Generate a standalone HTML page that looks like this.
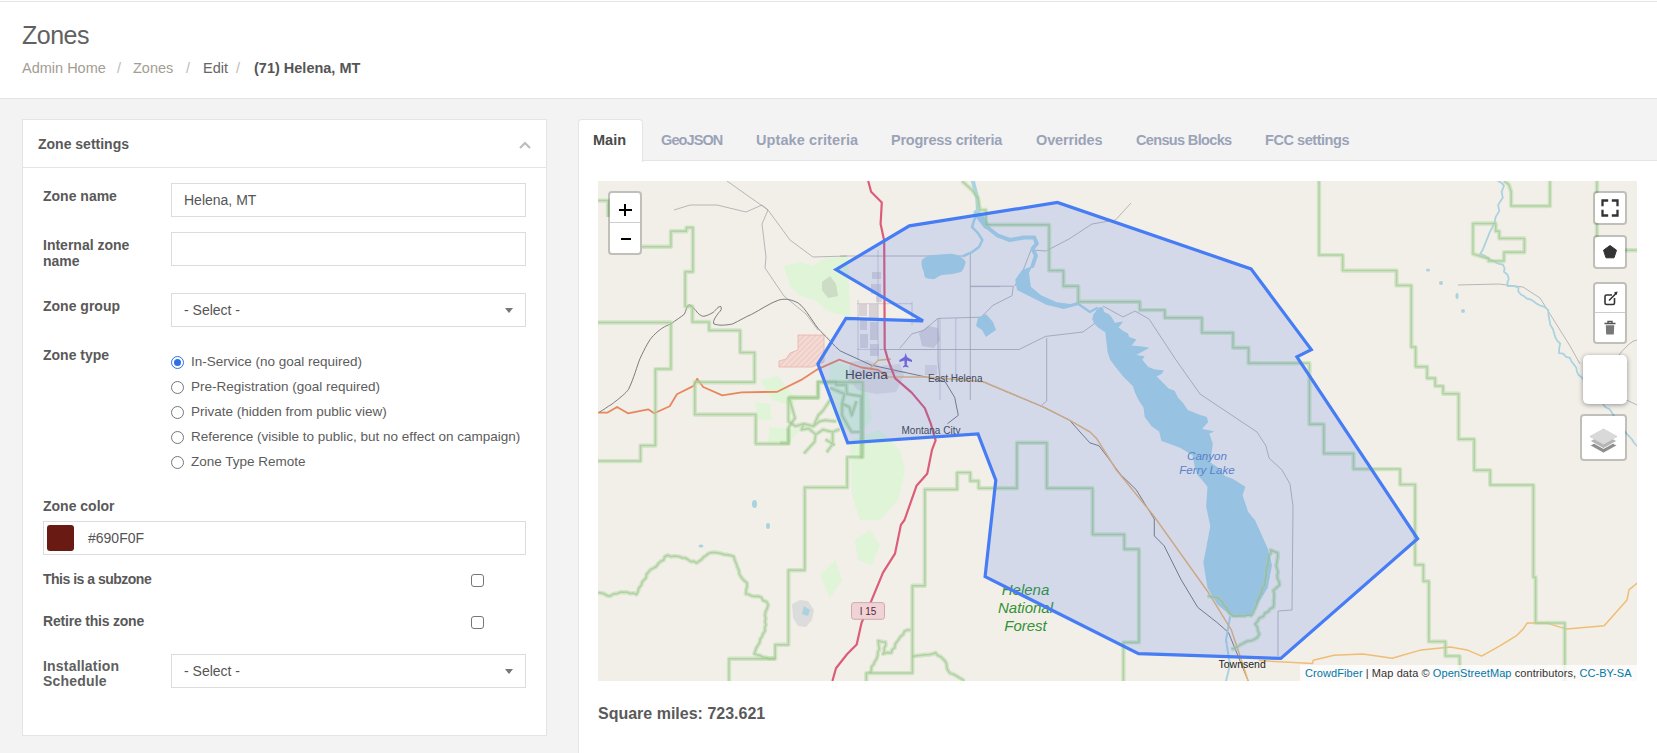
<!DOCTYPE html>
<html><head><meta charset="utf-8">
<style>
*{box-sizing:border-box;margin:0;padding:0}
html,body{width:1657px;height:753px;overflow:hidden}
body{background:#f3f3f3;font-family:"Liberation Sans",sans-serif;color:#555;position:relative}
.abs{position:absolute}
#topline{left:0;top:1px;width:1657px;height:1px;background:#e3e5e8}
#header{left:0;top:2px;width:1657px;height:97px;background:#fff;border-bottom:1px solid #e3e3e3}
#title{left:22px;top:21px;font-size:25px;letter-spacing:-0.5px;color:#616161;white-space:nowrap}
#crumbs{left:22px;top:60px;font-size:14.5px;white-space:nowrap;color:#a39d92}
#crumbs span{position:absolute;top:0;white-space:nowrap}
.card{left:22px;top:119px;width:525px;height:617px;background:#fff;border:1px solid #e4e4e4}
.cardhead{left:0;top:0;width:523px;height:48px;border-bottom:1px solid #e4e4e4}
.lbl{position:absolute;margin-top:-1px;font-weight:bold;font-size:14px;color:#595959;white-space:nowrap;line-height:16px}
.inp{position:absolute;left:148px;width:355px;height:34px;border:1px solid #dcdcdc;background:#fff;font-size:14px;color:#555;padding-left:12px;line-height:32px;white-space:nowrap}
.radio{position:absolute;left:148px;width:13px;height:13px;border:1px solid #767676;border-radius:50%;background:#fff}
.rtxt{position:absolute;left:168px;font-size:13.5px;color:#5c5c5c;white-space:nowrap;line-height:16px}
.chk{position:absolute;left:448px;width:13px;height:13px;border:1px solid #767676;border-radius:3px;background:#fff}
.arrow{position:absolute;right:12px;top:14px;width:0;height:0;border-left:4px solid transparent;border-right:4px solid transparent;border-top:5px solid #777}
#tabs{left:578px;top:132px}
.tab{position:absolute;top:0;font-size:14.5px;font-weight:bold;color:#9aa3b7;white-space:nowrap}
#panel{left:578px;top:160px;width:1079px;height:593px;background:#fff;border-left:1px solid #e4e4e4;border-top:1px solid #e4e4e4}
#maintab{left:578px;top:119px;width:65px;height:43px;background:#fff;border:1px solid #e4e4e4;border-bottom:none;border-radius:4px 4px 0 0}
#map{left:598px;top:181px;width:1039px;height:500px;background:#f2efe9;overflow:hidden}
.lc{position:absolute;background:#fff;border:2px solid rgba(0,0,0,0.2);border-radius:4px;background-clip:padding-box}
</style></head><body>
<div id="header" class="abs" style="top:0;height:99px"></div>
<div id="topline" class="abs"></div>
<div id="title" class="abs">Zones</div>
<div id="crumbs" class="abs">
 <span style="left:0">Admin Home</span>
 <span style="left:95px;color:#bbb">/</span>
 <span style="left:111px">Zones</span>
 <span style="left:164px;color:#bbb">/</span>
 <span style="left:181px;color:#666">Edit</span>
 <span style="left:214px;color:#bbb">/</span>
 <span style="left:232px;color:#555;font-weight:bold">(71) Helena, MT</span>
</div>

<div class="card abs">
 <div class="cardhead abs">
  <div class="lbl" style="left:15px;top:17px">Zone settings</div>
  <svg width="14" height="10" viewBox="0 0 14 10" style="position:absolute;left:495px;top:20px"><path d="M2,8 L7,3 L12,8" fill="none" stroke="#bdbdbd" stroke-width="2.2"/></svg>
 </div>
 <div class="lbl" style="left:20px;top:69px">Zone name</div>
 <div class="inp" style="top:63px">Helena, MT</div>
 <div class="lbl" style="left:20px;top:118px">Internal zone<br>name</div>
 <div class="inp" style="top:112px"></div>
 <div class="lbl" style="left:20px;top:179px">Zone group</div>
 <div class="inp" style="top:173px">- Select -<div class="arrow"></div></div>
 <div class="lbl" style="left:20px;top:228px">Zone type</div>
 <div class="radio" style="top:236px;border:1px solid #2f6fe6;background:#fff"><div style="position:absolute;left:2px;top:2px;width:7px;height:7px;border-radius:50%;background:#2f6fe6"></div></div><div class="rtxt" style="top:234px">In-Service (no goal required)</div>
 <div class="radio" style="top:261px"></div><div class="rtxt" style="top:259px">Pre-Registration (goal required)</div>
 <div class="radio" style="top:286px"></div><div class="rtxt" style="top:284px">Private (hidden from public view)</div>
 <div class="radio" style="top:311px"></div><div class="rtxt" style="top:309px">Reference (visible to public, but no effect on campaign)</div>
 <div class="radio" style="top:336px"></div><div class="rtxt" style="top:334px">Zone Type Remote</div>
 <div class="lbl" style="left:20px;top:379px">Zone color</div>
 <div class="inp" style="left:20px;width:483px;top:401px;padding-left:44px">#690F0F<div style="position:absolute;left:3px;top:3px;width:27px;height:26px;background:#691a12;border-radius:3px"></div></div>
 <div class="lbl" style="left:20px;top:452px;letter-spacing:-0.5px">This is a subzone</div>
 <div class="chk" style="top:454px"></div>
 <div class="lbl" style="left:20px;top:494px;letter-spacing:-0.2px">Retire this zone</div>
 <div class="chk" style="top:496px"></div>
 <div class="lbl" style="left:20px;top:540px;line-height:15px;font-size:14px;color:#606060;letter-spacing:0.2px">Installation<br>Schedule</div>
 <div class="inp" style="top:534px">- Select -<div class="arrow"></div></div>
</div>

<div id="panel" class="abs"></div>
<div id="maintab" class="abs"></div>
<div id="tabs" class="abs">
 <span class="tab" style="left:15px;color:#4a4a4a">Main</span>
 <span class="tab" style="left:83px;letter-spacing:-0.9px">GeoJSON</span>
 <span class="tab" style="left:178px;letter-spacing:0.1px">Uptake criteria</span>
 <span class="tab" style="left:313px;letter-spacing:-0.25px">Progress criteria</span>
 <span class="tab" style="left:458px;letter-spacing:-0.15px">Overrides</span>
 <span class="tab" style="left:558px;letter-spacing:-0.65px">Census Blocks</span>
 <span class="tab" style="left:687px;letter-spacing:-0.45px">FCC settings</span>
</div>
<div id="map" class="abs"><svg width="1039" height="500" viewBox="598 181 1039 500" style="position:absolute;left:0;top:0">
<rect x="598" y="181" width="1039" height="500" fill="#f2efe9"/>
<!-- light green patches -->
<g fill="#daf5d2" fill-opacity="0.75">
 <path d="M784,266 L800,262 L812,266 L826,258 L848,256 L850,316 L835,314 L826,310 L815,300 L800,296 L790,286 Z"/>
 <path d="M760,380 L778,376 L790,392 L800,398 L790,405 L772,400 Z"/>
 <path d="M850,440 L880,430 L900,450 L905,470 L898,500 L880,520 L860,520 L852,495 Z"/>
 <path d="M755,402 L770,404 L772,420 L758,420 Z"/>
 <path d="M770,427 L800,430 L790,442 L768,442 Z"/>
 <path d="M820,575 L835,560 L842,580 L830,598 Z"/>
 <path d="M830,362 L850,366 L868,392 L872,420 L860,432 L840,428 L828,400 Z"/>
 <path d="M855,540 L870,530 L880,545 L872,565 L858,560 Z"/>
</g>
<path d="M822,282 L830,276 L836,284 L838,296 L828,298 L822,290 Z" fill="#cddcc5"/>
<!-- town areas -->
<g fill="#d3ccd3" fill-opacity="0.85">
 <rect x="859" y="304" width="8" height="12"/><rect x="869" y="304" width="9" height="14"/><rect x="860" y="320" width="7" height="10"/>
 <rect x="870" y="322" width="8" height="18"/><rect x="860" y="334" width="8" height="14"/><rect x="870" y="344" width="9" height="12"/>
 <rect x="872" y="272" width="9" height="7"/><rect x="871" y="284" width="10" height="10"/><rect x="876" y="296" width="6" height="6"/>
 <path d="M919,333 L928,326 L938,328 L940,340 L934,348 L922,346 Z"/>
 <path d="M850,362 L868,360 L880,366 L900,364 L904,376 L896,392 L876,394 L858,390 L848,380 Z" fill-opacity="0.55"/>
 <rect x="925" y="365" width="12" height="10" fill-opacity="0.6"/>
</g>
<g fill="none" stroke="#bdb8c6" stroke-width="0.7">
 <path d="M857,303.7 H912 M858,300 V360 M878,250 V360 M912,302 V325 M940,318 V400 M955.8,318 V376 M857,349.4 H880 M970.7,286.7 H1000 M850,372 H905"/>
</g>
<defs><pattern id="hatch" width="4" height="4" patternUnits="userSpaceOnUse" patternTransform="rotate(-45)"><rect width="4" height="4" fill="#f4dcd6"/><path d="M0,2 H4" stroke="#e9b9ae" stroke-width="0.8"/></pattern></defs>
<path d="M798,335 L824,335 L824,362 L812,367 L779,367 L779,361 L786,359 L790,353 L798,350 Z" fill="url(#hatch)" stroke="#eab3a8" stroke-width="0.8"/>
<!-- gray roads -->
<g fill="none" stroke="#a3a3a6" stroke-width="0.75">
 <path d="M727,181 L768,210 L790,240 L813,257 L847,256"/>
 <path d="M674,210 L690,205 L717,205 L746,212 L762,205 L768,210"/>
 <path d="M768,210 L762,224 L766,257 L765,268 L784,296 L806,314 L818,330"/>
 <path d="M840,256 L964,256"/>
 <path d="M1131,203 L1115.5,220 L1092,224 L1069,239 L1046,251 L1031,250 L1021.6,274.2 L1014.5,286.2"/>
 
 <path d="M880,349.5 L1019,349.5 L1045.5,336.4 L1083,332 L1094,324 L1097,310"/>
 <path d="M938,318.4 L938,361 L940,380"/>
 <path d="M970.3,253 L970.3,400"/>
 <path d="M970.3,286.2 L1013.3,286.2 L1012,295.7 L993,305.3 L981,317.2 L938,318.4 L923.7,330.4 L911.7,334 L899.8,348.3"/><path d="M1046.7,338 L1046.7,401 L1042,405"/>
 <path d="M1103,306 L1123,317 L1135,311 L1149,319 L1176,360 L1200,394 L1257,432 L1266,446 L1269,458 L1282,470 L1290,484 L1293,506 L1292,610 L1278,611 L1278,656"/>
 <path d="M1458,285 L1499,284 L1523,287 L1540,298 L1570,346 L1580,364"/>
 <path d="M1615,360 Q1630,340 1637,340"/>
 <path d="M1616,395 L1637,405"/>
</g>
<!-- railway -->
<g fill="none" stroke="#6e6e6e" stroke-width="0.9">
 <path d="M598.5,412.5 C604,410 608,406 611,404.8 C620,398 626,393 628.5,389.4 C634,378 637,366 640,358.6 C645,348 649,340 653.5,335.5 C660,329 665,326 670.8,324 C676,320 681,317 684.3,314.3 C686,311 687,305 689.3,304.7 C692,305 694,309 695.8,310.5 C698,314 701,316 703.5,316.3 C707,316 710,314 713.2,312.4 C716,310 718,306 720.9,306.6 C722,308 721,311 719,312.4 C716,316 712,322 714,324 C720,326 727,325 732.4,324 C739,321 745,317 751.7,314.3 C760,310 770,303 778.6,300.1 C786,298 792,300 797.9,302.8 C806,308 814,325 821,331.7 C828,338 834,346 840.2,350.9 L871.1,365.1 L926,377 L945.2,381.8 L954.7,397.4 L958.3,415.3 L947.5,423.7"/>
 <path d="M983,381.8 L1043,406.9 L1069.4,420.1 L1089.8,442.8 L1099,445.8 L1120.6,474.5 L1136.1,489.6 L1154.3,519 L1154.3,535.9 L1164.1,545.7 L1180.9,579.3 L1197.7,607.3 L1217.3,622.7 L1228.5,632.6 L1248.2,681"/>
</g>
<!-- water -->
<g fill="#aad3df" stroke="none">
 <path d="M921.8,260.2 C926,256 930,255 933.5,254.9 L950.5,253.8 C956,254 960,256 962.2,258.1 C965,260 966,262 965.4,263.4 C964,268 963,270 961.1,271.9 L952.6,274 L942,275.1 C938,276 936,279 933.5,279.3 L926.1,278.2 C924,276 924,274 923.9,271.9 C922,268 921,264 921.8,260.2 Z"/>
 <path d="M1099.3,307.2 L1102.9,307.2 L1104.1,311.9 L1108.9,314.3 L1111.3,316.7 L1114.9,322.7 L1123.2,321.5 L1118.5,327.5 L1123.2,331.1 L1128.0,333.5 L1129.2,337.0 L1136.4,339.4 L1131.6,345.4 L1142.3,346.6 L1149.5,347.8 L1136.4,355.0 L1144.7,356.2 L1142.3,359.7 L1148.3,366.9 L1154.3,369.3 L1163.9,370.5 L1161.5,374.1 L1156.7,376.5 L1161.5,381.2 L1168.6,388.4 L1174.6,390.8 L1178.2,398.0 L1183.0,402.7 L1187.7,409.9 L1199.7,414.7 L1206.9,417.1 L1208.1,421.9 L1202.1,429.0 L1209.3,430.2 L1214.0,431.4 L1209.3,433.8 L1212.8,443.4 L1211.6,452.9 L1210.4,462.5 L1217.6,467.3 L1225,476 L1233,479 L1245.4,486.8 L1242.6,495.2 L1248.2,512.0 L1255.2,520.4 L1267.8,548.5 L1272.0,565.3 L1267.8,587.7 L1259.4,601.7 L1251.0,615.7 L1232.7,617.1 L1217.3,604.5 L1207.5,587.7 L1203.3,562.5 L1206.1,548.5 L1210.3,526.0 L1206.1,506.4 L1207.5,486.8 L1202.1,479.9 L1197.7,475.6 L1194.9,467.3 L1192.5,455.3 L1180.6,448.1 L1168.6,443.4 L1161.5,441.0 L1159.1,431.4 L1151.9,426.6 L1144.7,417.1 L1143.5,407.5 L1138.8,400.4 L1135.2,393.2 L1132.8,386.0 L1123.2,376.5 L1117.3,369.3 L1110.1,359.7 L1107.7,352.6 L1106.5,343.0 L1105.3,332.3 L1098.1,327.5 L1094.6,323.9 L1092.2,319.1 L1093.4,314.3 Z"/>
 <path d="M1032.5,266 L1029,272.8 L1030.8,286.7 L1041.1,295.3 L1056.7,302.2 L1070.5,303.9 L1077.4,302.2 L1079,305 L1063.6,309.1 L1046.3,304.8 L1029,296.1 L1017,290.1 L1015.2,279.7 L1022,270 Z"/>
 <path d="M978,318 L986,314 L993,322 L996,330 L990,334 L986,337 L982,330 L976,326 Z"/>
 <path d="M792,604 L800,600 L808,601 L814,610 L812,620 L806,627 L798,626 L793,618 Z" fill="#dcdcdc"/><path d="M804,606 L810,610 L808,616 L802,614 Z" fill="#aad3df"/>
 <ellipse cx="754.5" cy="504" rx="2.5" ry="4"/>
 <ellipse cx="768" cy="526" rx="2" ry="3"/>
 <ellipse cx="701" cy="546" rx="2.5" ry="1.5"/>
 <ellipse cx="1428" cy="270" rx="2" ry="1.5"/>
 <ellipse cx="1441" cy="283" rx="2" ry="2"/>
 <ellipse cx="1457" cy="296" rx="1.5" ry="3"/>
 <ellipse cx="1463" cy="311" rx="2" ry="2"/>
</g>
<g fill="none" stroke="#aad3df" stroke-linecap="round" stroke-linejoin="round">
 <path d="M972.9,181 L977.3,198.6 L978.1,212.4 L985.9,226.2 L998,235.7 L1010,240 L1023.9,237.5 L1034.2,237.5 L1036.8,243.5 L1032.5,248.7 L1035.9,255.6 L1032.5,266" stroke-width="4"/>
 <path d="M978,212 L973.8,221.1 L972.1,227.1 L977.3,232.3 L982.4,240 L979,247 L972.1,252.1 L963.5,256" stroke-width="2.5"/>
 <path d="M977,213 L986,225" stroke-width="7"/>
 <path d="M1498.1,181.0 L1501.5,182.9 L1504.0,185.8 L1501.6,191.8 L1502.8,197.7 L1500.4,201.3 L1498.1,204.9 L1499.3,210.9 L1495.7,216.9 L1494.5,222.8 L1492.1,227.6 L1489.7,232.4 L1487.3,238.4 L1484.9,244.3 L1482.5,250.3 L1480.1,253.9 L1483.9,255.4 L1487.3,257.5 L1491.4,260.1 L1495.7,262.3 L1499.2,263.8 L1502.8,264.7 L1504.6,268.1 L1504.0,271.8 L1507.5,274.7 L1508.8,279.0 L1507.4,282.4 L1507.6,286.2 L1511.3,285.9 L1514.9,286.3 L1518.4,287.4 L1518.3,291.4 L1520.8,294.5 L1524.0,296.1 L1526.7,298.5 L1530.3,299.3 L1533.5,301.2 L1536.5,303.6 L1539.9,305.3 L1544.5,306.9 L1548.3,310.1 L1548.5,314.9 L1549.4,319.6 L1550.3,324.7 L1553.0,329.2 L1554.2,333.4 L1555.4,337.5 L1557.3,340.9 L1560.2,343.5 L1559.2,348.2 L1559.0,353.1 L1563.1,353.6 L1566.1,356.9 L1570.0,357.9 L1571.5,361.5 L1574.0,364.6 L1576.3,367.8 L1577.0,371.8 L1578.8,375.3 L1582.0,377.5 L1584.0,380.8 L1586.2,384.0 L1589.0,386.6 L1591.1,389.8 L1594.6,391.8 L1596.2,395.4 L1599.4,397.6 L1601.8,400.6 L1603.1,404.3 L1605.5,407.2 L1609.4,409.0 L1611.5,412.0 L1613.6,415.2 L1614.3,419.3 L1617.7,421.5 L1619.5,424.8 L1622.4,427.3 L1624.2,430.6 L1626.5,433.6 L1629.4,436.5 L1632.0,439.5 L1634.2,443.0 L1637.0,446.0" stroke-width="1.8"/>
 <path d="M1230,617 L1226,640 L1230,665 L1226,681" stroke-width="2"/>
 <path d="M1077,303 L1090,312 L1097,308" stroke-width="2.2"/>
</g>
<!-- orange roads -->
<g fill="none" stroke-linecap="round" stroke-linejoin="round">
 <path d="M598,412.6 L607.6,412.6 L617.1,406.9 L627.9,413.3 L648.2,409.3 L654.2,413.3 L669.7,406.2 L676.9,394.2 L693.6,385.9 L697.2,378.7 L703.2,387 L722.3,395.4 L741.4,392.3 L777.3,391.8 L801.2,379.9 L817.9,369.1 L839.4,359.6 L861.5,367.5 L878.2,369.9 L887.8,377" stroke="#e8875e" stroke-width="1.8"/>
 <path d="M871,367.5 L878.2,360.3 L890.2,359.1" stroke="#e9b574" stroke-width="1.6"/>
 <path d="M887.8,377 L926,377 L983.4,381.8 L1043.2,406.9 L1069.4,420.1 L1090,432 L1096.7,438.6 L1116.4,470 L1152.9,514.8 L1208.9,593.3 L1231.3,629.8 L1248.2,681" stroke="#e9b574" stroke-width="1.5"/>
 <path d="M1259.4,660.6 L1312.6,663.4 L1313.2,660.3 L1334,655.3 L1363.1,654 L1392.2,658.2 L1421.3,649.9 L1450.4,647 L1467,649.9 L1481.6,656.1 L1500.3,645.7 L1516.9,635.3 L1523.1,629.1 L1527.3,622.9 L1546,622.9 L1566.8,629.1 L1604.2,625.8 L1627,600 L1629.1,589.6 L1637,583.4" stroke="#efbd74" stroke-width="1.5"/>
</g>
<!-- I-15 -->
<path d="M868.2,181 L871.1,191.8 L881.8,202.5 L880.6,224 L884.2,240.8 L884.7,348.3 L887.8,359.1 L895,378.2 L911.7,392.6 L924.8,408.1 L930.8,423.7 L935.6,440.4 L932,449.9 L927.2,473.8 L916.5,485.8 L904.5,520 L900.9,524.9 L895,553.6 L883,572.7 L871.1,601.4 L861.5,622.9 L856.7,644.4 L847.2,654 L836,668.3 L832.4,681" fill="none" stroke="#dc5d78" stroke-width="2.2" stroke-linejoin="round"/>
<!-- green boundaries -->
<defs><g id="gb">
 <path id="g1" d="M598,200.6 H608 V217 M642,246.7 H670.9 V231.2 H686.4 V227.6 H692.9 V271.8 H685.2 V306.5 H692.4 V322 H709.1 V330.4 H740.2 V352.6 H754.5 V382.3 H694.8 V414.5 H755.7 V443.7 H788.5 V427.7 L795,418 L789.2,397.8 H817.9 V382.3 H862.7 V457.1 H847.2 V487.4 H804.7 V570.2 H788.4 V644.7 H775.2 V658.7 H729 V681"/>
 <path id="g2" d="M598,322.5 H670.9 V369.1 H655.4 V445.6 H640.5 V461.1 H598"/>
 <path id="g3" d="M598.0,592.5 L601.1,593.1 L604.2,593.7 L606.9,595.6 L610.0,596.2 L613.3,594.0 L617.2,593.5 L620.8,592.1 L624.0,592.3 L627.2,592.2 L630.2,593.6 L633.5,593.1 L636.5,594.5 L638.0,591.4 L638.9,588.0 L641.3,585.3 L642.0,582.3 L644.0,579.9 L646.2,577.7 L646.4,574.4 L648.5,572.1 L650.5,569.6 L653.5,568.1 L656.3,566.5 L658.2,563.8 L660.4,561.4 L663.5,560.2 L664.7,556.7 L667.7,555.3 L671.2,556.6 L675.0,556.1 L678.6,556.4 L682.1,557.7 L685.3,558.0 L688.0,559.5 L690.6,561.5 L693.9,561.3 L696.6,563.0 L699.1,561.2 L701.6,559.4 L703.6,557.0 L706.3,555.4 L708.6,553.4 L711.6,552.5 L714.6,552.5 L717.6,552.8 L720.6,553.4 L723.8,554.5 L727.2,554.8 L730.6,555.4 L733.8,556.5 L734.8,560.2 L736.3,563.7 L737.4,567.3 L739.0,570.4 L739.2,573.9 L741.0,576.9 L743.7,580.2 L747.0,582.9 L747.1,586.6 L746.1,590.2 L745.8,593.8 L748.9,594.6 L751.9,596.0 L755.1,596.4 L758.5,596.3 L761.5,597.4 L763.0,600.5 L766.5,601.7 L768.2,604.6 L767.3,608.2 L765.6,611.7 L765.0,615.4 L765.7,618.5 L765.0,621.6 L765.9,624.8 L764.7,627.9 L765.0,631.0 L763.1,633.6 L762.0,636.7 L760.1,639.3 L759.7,642.7 L757.9,645.4 L756.3,648.0 L755.3,650.9 L754.3,653.8 L757.3,654.9 L760.3,655.6 L763.1,657.2 L766.3,657.5 L769.2,658.8 L772.4,658.2 L775.4,658.7"/>
 <path id="g4" d="M866.3,681 V673.1 H912.4 V585.8 H924.8 V489.4 H957.1 V472.6 H970.3 V481 H978.6 V488.2 H1016.9 V442.8 H1046.7 V488.2 H1092.6 V534.5 H1124.3 V549.3 H1138.9 V642.4 H1123.4 V681"/>
 <path id="g5" d="M869.9,673.1 L871.4,670.2 L871.5,666.8 L873.8,664.3 L874.9,661.3 L876.8,658.5 L877.6,655.4 L877.8,652.0 L879.4,649.2 L878.6,645.0 L878.2,640.8 L881.7,641.7 L885.4,642.0 L885.7,645.2 L884.3,648.0 L884.3,651.1 L883.0,654.0 L887.1,652.6 L891.4,652.8 L892.1,649.7 L894.8,647.8 L895.1,644.5 L896.7,642.0 L898.6,639.6 L900.4,636.7 L903.1,634.5 L904.5,631.3 L907.3,629.9 L910.5,630.1"/>
 <path id="g6" d="M912.4,656.4 L916.8,655.7 L921.3,655.2 L924.9,654.7 L928.6,654.8 L932.1,654.0 L935.6,652.8 L937.5,655.4 L940.7,656.6 L942.9,658.9 L945.2,661.1 L946.6,664.0 L946.8,667.4 L947.9,670.4 L949.9,673.1 L953.1,674.1 L956.0,675.7 L958.8,677.4 L961.7,679.0 L964.3,681.0"/>
 <path id="g7" d="M962,181 L972,190 L978,198 L980,210 L985.8,210 V224.7 H1049.1 V270.6 H1063.5 V286.2 H1078.3 V301.7 H1139.8 V310.1 H1164.8 V317.7 H1201.9 V332.8 H1233 V347.8 H1248.5 V363.3 H1309.4 V424.3 H1323.8 V453.5 H1353.5 V469.1 H1400.1 V484.6 H1415.1 V564.7 H1423.4 V581.3 H1428.8 V641.6 H1445.4 V656.1 H1459.6 V681"/>
 <path id="g8" d="M1319,181 V255.1 H1342.7 V270.6 H1396.5 V285.4 H1411.3 V347.1 H1415.6 V366.8 H1427.1 V378.2 H1435.2 V386.1 H1443.1 V393.8 H1458.6 V439.2 H1474.2 V470.3 H1490.2 V485.1 H1533.4 V577.2 H1535.6 V622.9 H1564.7 V681"/>
 <path id="g9" d="M1504,181 L1508.8,184.6 L1511.2,191.8 V206.1 H1549.9 V181"/>
 <path id="g10" d="M1473,223.5 H1495.7 V231.2 H1499.3 V238.4 H1524.4 V252.2 H1504 V261.1 H1488.5 V258.7 L1473,253.9 Z"/>
 <path id="g11" d="M1596.9,181 V250.3 H1637"/>
 <path id="g13" d="M788.4,397.5 H818.2 V382 H836.2 V384.9 H846.3 L846.9,393.9 L861.2,396.3 V458.4 M788.4,397.5 V421.4 L795.5,426.2 L803.9,423.8 L813.5,426.2 L819.4,421.4 L825.4,420.2 L836.2,421.4 M813.5,426.2 L818.2,415.4 L823,410.6 L830.2,399.9 M803.9,423.8 L801.5,429.7 L808.7,428.5 L815.8,434.5 L814.6,441.7 L803.9,453.6 M815.8,434.5 L823,429.7 L832.6,432.1 L832.6,444.1 L826.6,452.4 M825.4,439.3 L835,445.3 M832.6,432.1 L839.7,429.1 M830.2,387.9 L844.5,393.9 L842.1,403.5 L849.3,407 L851.7,415.4 L856.5,401.1 M842.1,403.5 L842.1,415.4 L846.9,423.8 L851.7,432.1 L861.2,432.1 M788.4,428.5 V442.9 H780"/>
 <path id="g12" d="M1207.5,596.1 L1210.8,596.5 L1214.0,597.2 L1217.3,597.5 L1219.9,599.8 L1222.5,602.1 L1224.0,605.2 L1226.3,607.7 L1228.2,610.6 L1229.8,613.7 L1232.7,615.7 L1235.8,616.1 L1238.8,615.7 L1241.8,615.9 L1244.9,616.1 L1248.0,614.8 L1251.0,615.7 L1253.0,613.2 L1254.1,610.3 L1255.5,607.6 L1256.6,604.7 L1257.2,601.6 L1258.5,598.8 L1259.2,595.8 L1261.4,593.4 L1261.7,590.1 L1262.9,587.3 L1265.0,584.9 L1264.9,581.6 L1265.4,578.4 L1266.2,575.3 L1266.2,572.0 L1266.6,568.8 L1267.4,565.7 L1267.8,562.5 L1268.8,559.4 L1268.6,556.1 L1270.8,553.2 L1270.6,549.9 L1274.0,551.5 L1277.6,552.7 L1277.9,555.9 L1277.4,559.1 L1276.9,562.2 L1276.2,565.3 L1277.0,568.5 L1278.1,571.7 L1277.2,575.2 L1277.5,578.5 L1279.1,581.6 L1279.6,584.9 L1276.5,587.7 L1273.4,590.5 L1274.2,593.9 L1274.2,597.2 L1273.7,600.6 L1273.9,603.9 L1273.4,607.3 L1270.2,608.7 L1268.2,611.7 L1265.0,613.0 L1263.3,616.4 L1259.4,618.0 L1257.6,621.3 L1255.2,624.1 L1257.3,627.1 L1257.9,630.7 L1259.4,634.0 L1257.3,637.5 L1253.8,639.6 L1251.0,640.7 L1247.8,641.0 L1245.1,642.3 L1242.5,643.7 L1239.8,645.2 L1237.2,647.0 L1234.3,648.2 L1231.3,649.4"/>
</g></defs>
<use href="#gb" fill="none" stroke="#b9d8ab" stroke-width="4.4" stroke-opacity="0.55" stroke-linejoin="round"/>
<use href="#gb" fill="none" stroke="#9fca90" stroke-width="1.5" stroke-opacity="0.7" stroke-linejoin="round"/>
<!-- labels -->
<g font-family="Liberation Sans, sans-serif" fill="#333">
 <text x="845" y="379.4" font-size="13.5" fill="#444" stroke="#fff" stroke-width="0" >Helena</text>
 <text x="928" y="381.8" font-size="10" fill="#444">East Helena</text>
 <text x="901.5" y="433.7" font-size="10" fill="#444">Montana City</text>
 <text x="1218.5" y="667.6" font-size="10.5" fill="#222">Townsend</text>
 <g font-style="italic" fill="#5f86c4" font-size="11.6" text-anchor="middle">
  <text x="1207" y="459.7">Canyon</text>
  <text x="1207" y="474">Ferry Lake</text>
 </g>
 <g font-style="italic" fill="#349234" font-size="15" text-anchor="middle">
  <text x="1025.5" y="595.4">Helena</text>
  <text x="1025.5" y="613.3">National</text>
  <text x="1025.5" y="631.3">Forest</text>
 </g>
</g>
<!-- I-15 shield -->
<rect x="851.5" y="602.6" width="33" height="16.7" rx="2.5" fill="#efd3d7" stroke="#c99aa2" stroke-width="0.8"/>
<text x="868" y="614.5" font-family="Liberation Sans, sans-serif" font-size="10" fill="#5a2a34" text-anchor="middle">I 15</text>
<!-- airplane -->
<path d="M905.7,353 L907,357 L912,360 L912,362 L907,360.5 L906.8,365 L908.5,366.5 L908.5,367.5 L905.7,366.8 L902.9,367.5 L902.9,366.5 L904.6,365 L904.4,360.5 L899.4,362 L899.4,360 L904.4,357 Z" fill="#7b66d6"/>
<!-- zone polygon -->
<path d="M835.9,269.6 L909.4,225.9 L1057.4,202.5 L1251,268.9 L1311.3,349.6 L1296.9,356.8 L1417.6,538.8 L1280.8,658.4 L1138.5,653.7 L985.1,576.6 L995.8,480.2 L978,434 L847.7,442.8 L817.9,363.9 L845.9,318.4 L923,320.9 Z" fill="#3a6ff0" fill-opacity="0.17" stroke="#467cf4" stroke-width="3.2" stroke-linejoin="miter"/>
</svg>

<div class="lc" style="left:10px;top:10px;width:34px;height:64px">
 <div style="position:absolute;left:0;top:29px;width:30px;height:1px;background:#ccc"></div>
 <div style="position:absolute;left:9px;top:15.7px;width:12.5px;height:2.4px;background:#000"></div>
 <div style="position:absolute;left:14px;top:10.5px;width:2.4px;height:12.5px;background:#000"></div>
 <div style="position:absolute;left:10.5px;top:44.5px;width:10px;height:2.4px;background:#000"></div>
</div>
<div class="lc" style="left:995px;top:10px;width:34px;height:34px">
 <svg width="30" height="30" viewBox="0 0 30 30" style="position:absolute;left:0;top:0"><path d="M7.5,13.2 V7.5 H13.2 M16.8,7.5 H22.5 V13.2 M22.5,16.8 V22.5 H16.8 M13.2,22.5 H7.5 V16.8" fill="none" stroke="#333" stroke-width="2.3"/></svg>
</div>
<div class="lc" style="left:995px;top:54px;width:34px;height:34px">
 <svg width="30" height="30" viewBox="0 0 30 30" style="position:absolute;left:0;top:0"><path d="M15,8.5 L21.5,13.2 L19,20.8 L11,20.8 L8.5,13.2 Z" fill="#333" stroke="#333" stroke-width="1" stroke-linejoin="round"/></svg>
</div>
<div class="lc" style="left:995px;top:101px;width:34px;height:62px">
 <div style="position:absolute;left:0;top:28px;width:30px;height:1px;background:#ccc"></div>
 <svg width="30" height="60" viewBox="0 0 30 60" style="position:absolute;left:0;top:0">
  <path d="M17,11 H11.5 Q10,11 10,12.5 V19 Q10,20.5 11.5,20.5 H18 Q19.5,20.5 19.5,19 V14" fill="none" stroke="#333" stroke-width="1.6"/>
  <path d="M14,16.5 L20.5,10 M19.5,9 L21.5,8.5 L21,10.5" fill="none" stroke="#333" stroke-width="1.6"/>
  <path d="M9.5,39.5 H20.5 M13,39.5 V37.5 H17 V39.5" fill="none" stroke="#555" stroke-width="1.4"/>
  <path d="M10.8,41.3 H19.2 L18.8,50.5 H11.2 Z" fill="#777"/>
 </svg>
</div>
<div style="position:absolute;left:985px;top:174px;width:44px;height:49px;background:#fff;border-radius:5px;box-shadow:0 1px 5px rgba(0,0,0,0.4)"></div>
<div class="lc" style="left:982px;top:233px;width:47px;height:47px">
 <svg width="43" height="43" viewBox="0 0 43 43" style="position:absolute;left:0;top:0">
  <path d="M8,29.5 L21.5,22 L35,29.5 L21.5,37 Z" fill="#8e8e8e" stroke="#fff" stroke-width="0.8"/>
  <path d="M8,25 L21.5,17.5 L35,25 L21.5,32.5 Z" fill="#b5b5b5" stroke="#fff" stroke-width="0.9"/>
  <path d="M8,20.5 L21.5,13 L35,20.5 L21.5,28 Z" fill="#d9d9d9" stroke="#fff" stroke-width="0.9"/>
  <path d="M8,20.5 L21.5,13 L35,20.5 L21.5,28 Z" fill="none" stroke="#a8a8a8" stroke-width="0.5"/>
 </svg>
</div>
<div style="position:absolute;left:702px;top:484px;width:337px;height:16px;background:rgba(255,255,255,0.75);font-family:'Liberation Sans',sans-serif;font-size:11px;letter-spacing:0.08px;line-height:16px;color:#333;white-space:nowrap;padding-left:5px">
 <span style="color:#0078a8">CrowdFiber</span> | Map data © <span style="color:#0078a8">OpenStreetMap</span> contributors, <span style="color:#0078a8">CC-BY-SA</span>
</div>
</div>
<div class="abs" style="left:598px;top:705px;font-size:16px;font-weight:bold;color:#5a5a5a;white-space:nowrap">Square miles: 723.621</div>
</body></html>
